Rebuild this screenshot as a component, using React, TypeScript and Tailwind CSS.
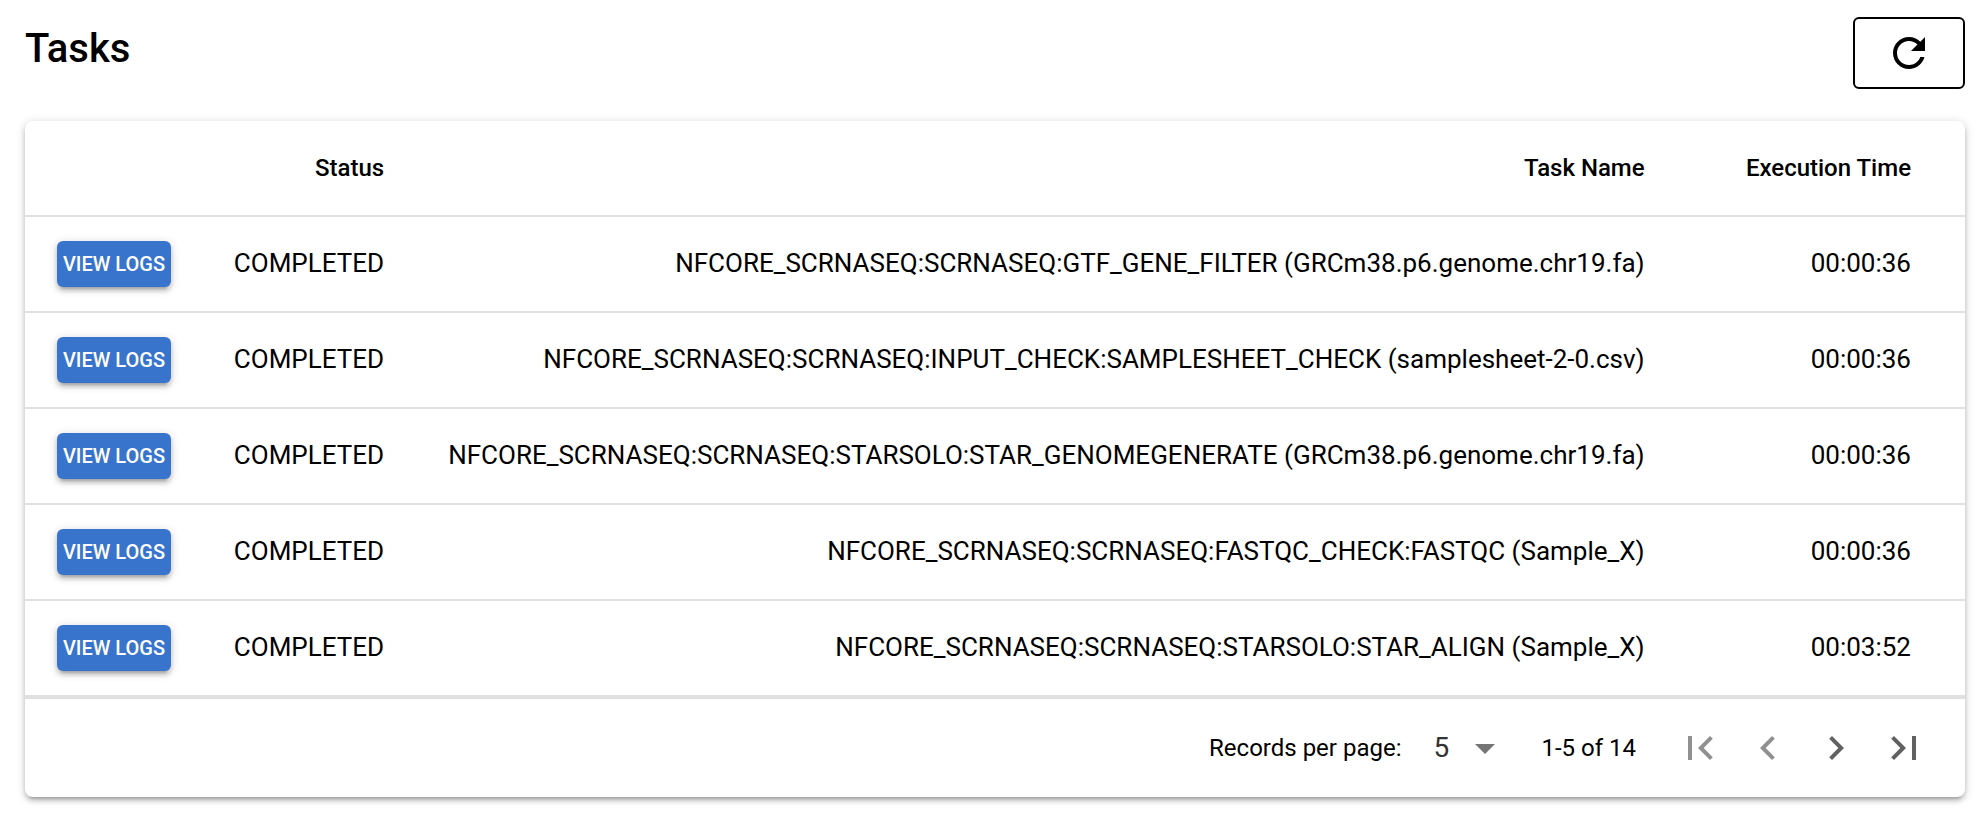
import React from "react";

const tasks = [
  { status: "COMPLETED", name: "NFCORE_SCRNASEQ:SCRNASEQ:GTF_GENE_FILTER (GRCm38.p6.genome.chr19.fa)", time: "00:00:36" },
  { status: "COMPLETED", name: "NFCORE_SCRNASEQ:SCRNASEQ:INPUT_CHECK:SAMPLESHEET_CHECK (samplesheet-2-0.csv)", time: "00:00:36" },
  { status: "COMPLETED", name: "NFCORE_SCRNASEQ:SCRNASEQ:STARSOLO:STAR_GENOMEGENERATE (GRCm38.p6.genome.chr19.fa)", time: "00:00:36" },
  { status: "COMPLETED", name: "NFCORE_SCRNASEQ:SCRNASEQ:FASTQC_CHECK:FASTQC (Sample_X)", time: "00:00:36" },
  { status: "COMPLETED", name: "NFCORE_SCRNASEQ:SCRNASEQ:STARSOLO:STAR_ALIGN (Sample_X)", time: "00:03:52" },
];

const icons = {
  refresh:
    "M17.65 6.35C16.2 4.9 14.21 4 12 4c-4.42 0-7.99 3.58-7.99 8s3.57 8 7.99 8c3.73 0 6.84-2.55 7.73-6h-2.08c-.82 2.33-3.04 4-5.65 4-3.31 0-6-2.69-6-6s2.69-6 6-6c1.66 0 3.14.69 4.22 1.78L13 11h7V4l-2.35 2.35z",
  first: "M18.41 16.59L13.82 12l4.59-4.59L17 6l-6 6 6 6zM6 6h2v12H6z",
  previous: "M15.41 7.41L14 6l-6 6 6 6 1.41-1.41L10.83 12z",
  next: "M10 6L8.59 7.41 13.17 12l-4.58 4.59L10 18l6-6z",
  last: "M5.59 7.41L10.18 12l-4.59 4.59L7 18l6-6-6-6zM16 6h2v12h-2z",
  dropdown: "M7 10l5 5 5-5z",
};

function Icon({ path, className = "" }: { path: string; className?: string }) {
  return (
    <svg viewBox="0 0 24 24" fill="currentColor" aria-hidden="true" className={`size-12 ${className}`}>
      <path d={path} />
    </svg>
  );
}

function PageButton({ label, path, disabled = false }: { label: string; path: string; disabled?: boolean }) {
  return (
    <button
      type="button"
      aria-label={label}
      disabled={disabled}
      className="flex w-[68px] shrink-0 justify-center text-[#616161] disabled:text-[#909090]"
    >
      <Icon path={path} />
    </button>
  );
}

export default function App() {
  return (
    <main className="bg-white pt-[17px] pr-[18px] pb-4 pl-[25px] font-[Roboto,sans-serif] text-black">
      <header className="mb-8 flex items-start justify-between">
        <h1 className="text-[40px] leading-[64px] font-medium">Tasks</h1>
        <button
          type="button"
          aria-label="Refresh"
          className="flex h-[72px] w-28 items-center justify-center rounded-md border-2 border-black"
        >
          <Icon path={icons.refresh} />
        </button>
      </header>

      <section className="rounded-lg bg-white shadow-[0_2px_10px_rgba(0,0,0,0.2),0_4px_4px_rgba(0,0,0,0.14),0_6px_2px_-4px_rgba(0,0,0,0.12)]">
        <table className="w-full border-separate border-spacing-0 text-right whitespace-nowrap">
          <thead>
            <tr className="h-24 text-[24px] leading-9">
              <td className="w-[177px] border-b-2 border-[#e0e0e0]" />
              <th scope="col" className="w-[214px] border-b-2 border-[#e0e0e0] px-8 font-medium">Status</th>
              <th scope="col" className="border-b-2 border-[#e0e0e0] px-8 font-medium">Task Name</th>
              <th scope="col" className="w-[290px] border-b-2 border-[#e0e0e0] pr-[54px] pl-8 font-medium">Execution Time</th>
            </tr>
          </thead>
          <tbody className="text-[26px] leading-9">
            {tasks.map((task) => (
              <tr key={task.name} className="h-24">
                <td className="border-b-2 border-[#e0e0e0] pr-7 pl-8">
                  <button
                    type="button"
                    className="flex h-[46px] w-[114px] items-center justify-center rounded-md bg-[#3874cb] text-[20px] font-medium text-white shadow-[0_2px_10px_rgba(0,0,0,0.2),0_4px_4px_rgba(0,0,0,0.14),0_6px_2px_-4px_rgba(0,0,0,0.12)]"
                  >
                    VIEW LOGS
                  </button>
                </td>
                <td className="border-b-2 border-[#e0e0e0] px-8 pb-0.5">{task.status}</td>
                <td className="border-b-2 border-[#e0e0e0] px-8 pb-0.5">{task.name}</td>
                <td className="border-b-2 border-[#e0e0e0] pr-[54px] pb-0.5 pl-8">{task.time}</td>
              </tr>
            ))}
          </tbody>
        </table>

        <footer className="flex h-[100px] items-center justify-end border-t-2 border-[#e0e0e0] pr-[27px] text-[24px] leading-9">
          <label htmlFor="page-size">Records per page:</label>
          <div className="relative ml-8 flex items-center">
            <select
              id="page-size"
              defaultValue="5"
              className="h-12 w-[76px] appearance-none bg-transparent text-[28px] text-[#333333]"
            >
              <option>5</option>
              <option>10</option>
              <option>20</option>
            </select>
            <Icon path={icons.dropdown} className="pointer-events-none absolute right-0 text-[#757575]" />
          </div>
          <span className="mr-[30px] ml-8">1-5 of 14</span>
          <nav aria-label="Pagination" className="flex">
            <PageButton label="First page" path={icons.first} disabled />
            <PageButton label="Previous page" path={icons.previous} disabled />
            <PageButton label="Next page" path={icons.next} />
            <PageButton label="Last page" path={icons.last} />
          </nav>
        </footer>
      </section>
    </main>
  );
}
